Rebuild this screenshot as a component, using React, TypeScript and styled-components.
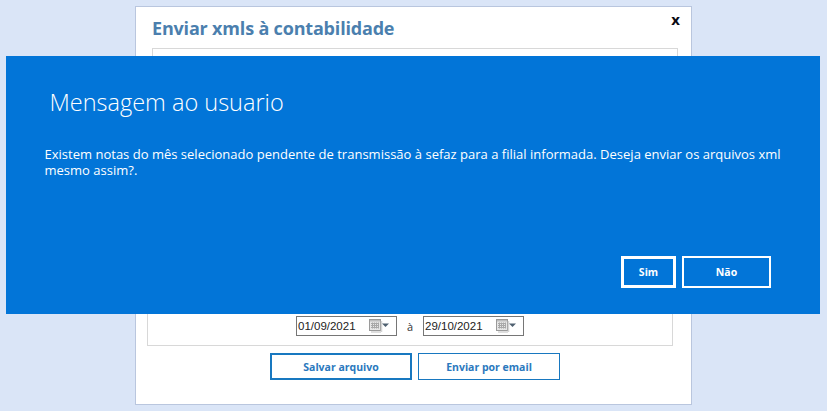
import styled, { createGlobalStyle } from 'styled-components';

const GlobalStyle = createGlobalStyle`
  html, body {
    margin: 0;
    padding: 0;
    background: #dae5f7;
  }
  body {
    font-family: 'Open Sans', 'Noto Sans', 'Liberation Sans', sans-serif;
  }
`;

const CalendarIcon = () => (
  <svg width='20' height='14' viewBox='0 0 20 14'>
    <rect x='0.5' y='0.5' width='11' height='11' fill='#e6e6e6' stroke='#9a9a9a' />
    <rect x='1' y='1' width='10' height='1.5' fill='#bdbdbd' />
    <path
      d='M2 4.5h8M2 6.5h8M2 8.5h8M3.5 3.5v6M5.5 3.5v6M7.5 3.5v6M9.5 3.5v6'
      stroke='#a8a8a8'
      strokeWidth='1'
      fill='none'
    />
    <path d='M12.5 2v11M2 13h10' stroke='#d4d4d4' strokeWidth='1.5' />
    <path d='M13 4.5h7l-3.5 3.5z' fill='#4f6070' />
  </svg>
);

const DateInput = ({ value }: { value: string }) => (
  <DateBox>
    <span>{value}</span>
    <CalendarIcon />
  </DateBox>
);

const App = () => {
  return (
    <Page>
      <GlobalStyle />
      <Window>
        <CloseButton>x</CloseButton>
        <Title>Enviar xmls à contabilidade</Title>
        <TopPanel />
        <BottomPanel>
          <DateRow>
            <DateInput value='01/09/2021' />
            <DateSeparator>à</DateSeparator>
            <DateInput value='29/10/2021' />
          </DateRow>
        </BottomPanel>
        <Actions>
          <ActionButton $primary>Salvar arquivo</ActionButton>
          <ActionButton>Enviar por email</ActionButton>
        </Actions>
      </Window>
      <Dialog>
        <DialogTitle>Mensagem ao usuario</DialogTitle>
        <DialogText>
          Existem notas do mês selecionado pendente de transmissão à sefaz para a filial informada. Deseja enviar os
          arquivos xml mesmo assim?.
        </DialogText>
        <DialogActions>
          <DialogButton $focused>Sim</DialogButton>
          <DialogButton>Não</DialogButton>
        </DialogActions>
      </Dialog>
    </Page>
  );
};

export default App;

const Page = styled.div`
  position: relative;
  width: 827px;
  height: 411px;
  padding-top: 6px;
  box-sizing: border-box;
  overflow: hidden;
  display: flex;
  justify-content: center;
  background: #dae5f7;
`;

const Window = styled.div`
  position: relative;
  width: 557px;
  height: 399px;
  box-sizing: border-box;
  border: 1px solid #b9c6de;
  background: #fff;
  padding: 9px 18px 0 11px;
`;

const CloseButton = styled.span`
  position: absolute;
  top: 2px;
  right: 11px;
  font-size: 15px;
  line-height: 20px;
  font-weight: 700;
  color: #0b0b14;
`;

const Title = styled.h1`
  margin: 0 0 7px 5px;
  font-size: 18px;
  line-height: 25px;
  font-weight: 700;
  letter-spacing: -0.18px;
  color: #4b7fae;
`;

const TopPanel = styled.div`
  height: 100px;
  margin: 0 -5px 10px 5px;
  border: 1px solid #d8d8d8;
`;

const BottomPanel = styled.div`
  height: 186px;
  box-sizing: border-box;
  border: 1px solid #d8d8d8;
  display: flex;
  flex-direction: column;
  justify-content: flex-end;
  padding-bottom: 9px;
`;

const DateRow = styled.div`
  display: flex;
  justify-content: center;
  align-items: center;
  gap: 8px;
`;

const DateBox = styled.div`
  width: 101px;
  height: 20px;
  box-sizing: border-box;
  border: 1px solid #767676;
  padding: 0 7px 0 1px;
  display: flex;
  align-items: center;
  justify-content: space-between;
  font-family: 'Liberation Sans', Arial, sans-serif;
  font-size: 11.5px;
  color: #222;
  background: #fff;
`;

const DateSeparator = styled.span`
  width: 10px;
  text-align: center;
  font-size: 11px;
  color: #333;
`;

const Actions = styled.div`
  display: flex;
  justify-content: center;
  gap: 6px;
  margin-top: 7px;
  padding-left: 10px;
`;

const ActionButton = styled.button<{ $primary?: boolean }>`
  width: 142px;
  height: 27px;
  box-sizing: border-box;
  padding: 0;
  background: #fff;
  border: ${({ $primary }) => ($primary ? '2px' : '1px')} solid #1878c0;
  font-family: inherit;
  font-size: 10.5px;
  font-weight: 700;
  color: #2a78bd;
`;

const Dialog = styled.div`
  position: absolute;
  left: 6px;
  top: 56px;
  width: 814px;
  height: 258px;
  box-sizing: border-box;
  padding: 31px 49px 0 38.5px;
  background: #0275d8;
  color: #fff;
  display: flex;
  flex-direction: column;
`;

const DialogTitle = styled.h2`
  margin: 0 0 29px 5px;
  font-size: 23.5px;
  line-height: 30px;
  font-weight: 300;
`;

const DialogText = styled.p`
  margin: 0;
  width: 745px;
  font-size: 13px;
  line-height: 16px;
  font-weight: 400;
  letter-spacing: 0.01px;
`;

const DialogActions = styled.div`
  margin-top: auto;
  margin-bottom: 26px;
  display: flex;
  justify-content: flex-end;
  gap: 6px;
`;

const DialogButton = styled.button<{ $focused?: boolean }>`
  width: ${({ $focused }) => ($focused ? '55px' : '89px')};
  height: 32px;
  box-sizing: border-box;
  padding: 0;
  background: transparent;
  border: ${({ $focused }) => ($focused ? '3px' : '2px')} solid #fff;
  font-family: inherit;
  font-size: 10.5px;
  font-weight: 700;
  color: #fff;
`;
